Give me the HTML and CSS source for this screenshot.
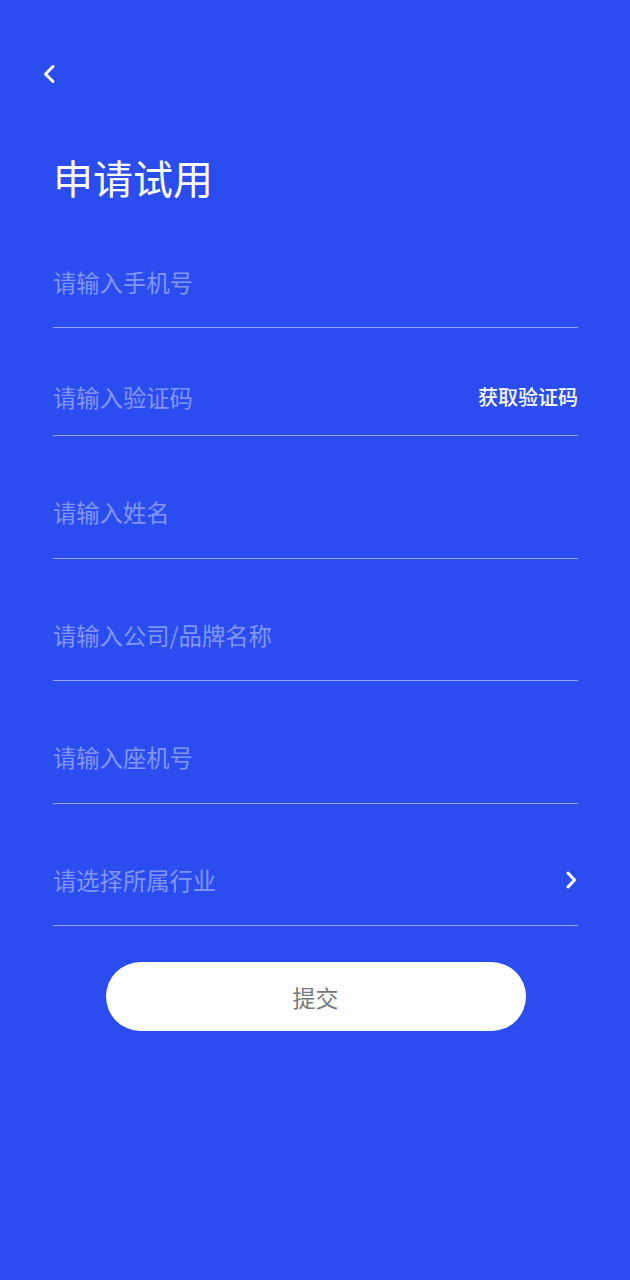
FILE: index.html
```html
<!DOCTYPE html>
<html lang="zh-CN">
<head>
<meta charset="utf-8">
<title>申请试用</title>
<link rel="stylesheet" href="styles.css">
</head>
<body>
<div class="page">
  <div class="topbar">
    <svg class="back" width="14" height="20" viewBox="0 0 14 20"><path d="M11 2.5 L3.5 10 L11 17.5" fill="none" stroke="#fff" stroke-width="3" stroke-linecap="round" stroke-linejoin="round"/></svg>
  </div>
  <h1 class="title">申请试用</h1>
  <div class="form">
    <div class="row"><span class="ph">请输入手机号</span></div>
    <div class="row row-code"><span class="ph">请输入验证码</span><span class="code">获取验证码</span></div>
    <div class="row tall"><span class="ph">请输入姓名</span></div>
    <div class="row"><span class="ph">请输入公司/品牌名称</span></div>
    <div class="row tall"><span class="ph">请输入座机号</span></div>
    <div class="row"><span class="ph">请选择所属行业</span>
      <svg class="arrow" width="14" height="20" viewBox="0 0 14 20"><path d="M4 3 L10.5 10 L4 17" fill="none" stroke="#fff" stroke-width="3" stroke-linecap="round" stroke-linejoin="round"/></svg>
    </div>
  </div>
  <div class="btn-wrap"><div class="btn">提交</div></div>
</div>
</body>
</html>
```

FILE: styles.css
```css
html, body {
  margin: 0;
  padding: 0;
  background: #2b4df0;
}
body {
  font-family: "Noto Sans CJK SC", "Noto Sans", sans-serif;
  width: 630px;
  min-height: 1280px;
}
.page {
  padding: 0 52px 0 53px;
}
.topbar {
  height: 138px;
  padding-top: 64px;
  box-sizing: border-box;
  margin-left: -11px;
}
.back {
  display: block;
}
.title {
  margin: 0;
  font-size: 40px;
  line-height: 40px;
  height: 40px;
  font-weight: 400;
  color: #fff;
  padding-top: 19px;
  padding-bottom: 9px;
}
.form {
  display: flex;
  flex-direction: column;
}
.row {
  display: flex;
  align-items: center;
  justify-content: space-between;
  padding: 61px 0 30px;
  line-height: 30px;
  height: 30px;
  border-bottom: 1px solid rgba(255, 255, 255, 0.5);
}
.row.tall {
  padding-bottom: 31px;
}
.row-code {
  padding: 54px 0 23px;
}
.ph {
  font-size: 23.3px;
  color: rgba(255, 255, 255, 0.42);
}
.code {
  font-size: 20px;
  color: #fff;
  font-weight: 500;
}
.arrow {
  display: block;
}
.btn-wrap {
  display: flex;
  justify-content: center;
  padding-top: 36px;
}
.btn {
  width: 420px;
  height: 69px;
  border-radius: 35px;
  background: #fff;
  color: #777;
  font-size: 23px;
  display: flex;
  align-items: center;
  justify-content: center;
}
```
